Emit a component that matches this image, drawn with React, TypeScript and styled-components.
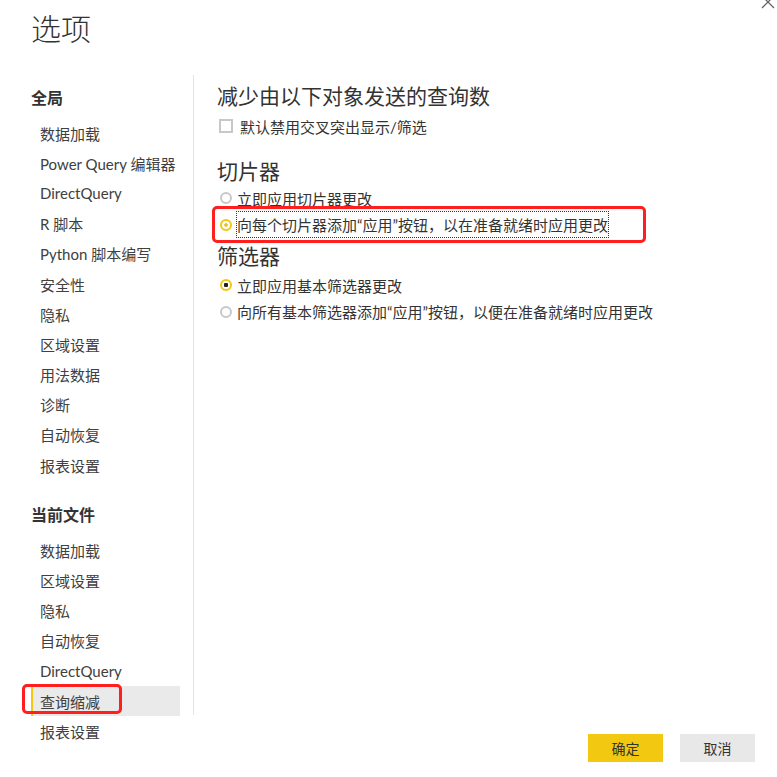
import React from "react";
import styled, { createGlobalStyle, css } from "styled-components";

const Global = createGlobalStyle`
  html, body { margin: 0; padding: 0; background: #fff; }
  body {
    font-family: Lato, "Noto Sans CJK SC", sans-serif;
    color: #333;
  }
  * { box-sizing: border-box; }
`;

const Dialog = styled.div`
  position: relative;
  width: 777px;
  height: 777px;
  display: flex;
  flex-direction: column;
  overflow: hidden;
  background: #fff;
`;

const Header = styled.header`
  height: 75px;
  padding: 7px 0 0 31px;
  flex-shrink: 0;
`;

const Title = styled.h1`
  margin: 0;
  font-family: "Noto Sans CJK SC", sans-serif;
  font-weight: 300;
  font-size: 30px;
  line-height: 40px;
  color: #333;
`;

const Close = styled.button`
  position: absolute;
  top: -7px;
  right: 0;
  width: 18px;
  height: 18px;
  padding: 0;
  border: 0;
  background: transparent;
  color: #666;
`;

const Body = styled.div`
  flex: 1;
  display: flex;
  align-items: flex-start;
`;

const Nav = styled.nav`
  width: 193px;
  padding: 10px 0 0 31px;
  flex-shrink: 0;
`;

const NavHeading = styled.div<{ $first?: boolean }>`
  font-family: "Noto Sans CJK SC", sans-serif;
  font-weight: 700;
  font-size: 16px;
  line-height: 24px;
  color: #333;
  margin: ${(p) => (p.$first ? "0" : "22px")} 0 9px;
`;

const NavItem = styled.div<{ $active?: boolean }>`
  position: relative;
  width: 149px;
  height: 30.2px;
  display: flex;
  align-items: center;
  padding-left: 9px;
  font-size: 15px;
  color: #404040;
  white-space: nowrap;
  ${(p) =>
    p.$active &&
    css`
      background: #eaeaea;
      border-left: 2px solid #f2c811;
      padding-left: 7px;
    `}
`;

const Divider = styled.div`
  width: 1px;
  height: 640px;
  background: #e3e3e3;
  flex-shrink: 0;
`;

const Content = styled.main`
  flex: 1;
  align-self: stretch;
  display: flex;
  flex-direction: column;
  padding: 6px 22px 15px 23px;
`;

const SectionTitle = styled.h2<{ $gap: number }>`
  margin: ${(p) => p.$gap}px 0 0;
  font-family: "Noto Sans CJK SC", sans-serif;
  font-weight: 400;
  font-size: 21px;
  line-height: 28px;
  color: #333;
`;

const CheckRow = styled.label`
  margin-top: 6px;
  height: 22px;
  display: flex;
  align-items: center;
  gap: 7px;
  padding-left: 2px;
  font-size: 15px;
  color: #333;
`;

const CheckBox = styled.span`
  width: 14px;
  height: 14px;
  border: 2px solid #c8c8c8;
  background: #fff;
`;

const RadioGroup = styled.div<{ $gap: number }>`
  margin-top: ${(p) => p.$gap}px;
  display: flex;
  flex-direction: column;
`;

const RadioRow = styled.label`
  position: relative;
  height: 26.5px;
  display: flex;
  align-items: center;
  gap: 5px;
  padding-left: 3px;
  font-size: 15px;
  color: #333;
  white-space: nowrap;
`;

const RadioDot = styled.span<{ $checked?: boolean; $focus?: boolean }>`
  width: 12px;
  height: 12px;
  border-radius: 50%;
  flex-shrink: 0;
  border: 2px solid ${(p) => (p.$checked ? "#f2c811" : "#c8c8c8")};
  background: ${(p) =>
    p.$checked
      ? p.$focus
        ? "radial-gradient(circle, #e8c030 0 1.5px, #fff 2px)"
        : "radial-gradient(circle, #222 0 2px, #fff 2.5px)"
      : "#fff"};
`;

const RadioText = styled.span<{ $focus?: boolean }>`
  padding: 2px 0;
  ${(p) =>
    p.$focus &&
    css`
      outline: 1px dotted #333;
      outline-offset: 0;
    `}
`;

const Annotation = styled.span<{ $l: number; $t: number; $w: number; $h: number }>`
  position: absolute;
  left: ${(p) => p.$l}px;
  top: ${(p) => p.$t}px;
  width: ${(p) => p.$w}px;
  height: ${(p) => p.$h}px;
  border: 3px solid #ff1f1f;
  border-radius: 5px;
  pointer-events: none;
`;

const Footer = styled.footer`
  margin-top: auto;
  display: flex;
  justify-content: flex-end;
  gap: 17px;
`;

const Button = styled.button<{ $primary?: boolean }>`
  width: 75px;
  height: 28px;
  border: 0;
  padding: 0;
  font-family: "Noto Sans CJK SC", sans-serif;
  font-size: 14px;
  color: #333;
  background: ${(p) => (p.$primary ? "#f2c811" : "#e8e8e8")};
`;

const globalItems = [
  "数据加载",
  "Power Query 编辑器",
  "DirectQuery",
  "R 脚本",
  "Python 脚本编写",
  "安全性",
  "隐私",
  "区域设置",
  "用法数据",
  "诊断",
  "自动恢复",
  "报表设置",
];

const fileItems = ["数据加载", "区域设置", "隐私", "自动恢复", "DirectQuery", "查询缩减", "报表设置"];

export default function App() {
  return (
    <>
      <Global />
      <Dialog>
        <Close aria-label="关闭">
          <svg width="18" height="18" viewBox="0 0 18 18">
            <path d="M3 3 L15 15 M15 3 L3 15" stroke="#666" strokeWidth="1.3" fill="none" />
          </svg>
        </Close>
        <Header>
          <Title>选项</Title>
        </Header>
        <Body>
          <Nav>
            <NavHeading $first>全局</NavHeading>
            {globalItems.map((t, i) => (
              <NavItem key={"g" + i}>{t}</NavItem>
            ))}
            <NavHeading>当前文件</NavHeading>
            {fileItems.map((t, i) => (
              <NavItem key={"f" + i} $active={t === "查询缩减"}>
                {t}
                {t === "查询缩减" && <Annotation $l={-11} $t={-2} $w={100} $h={30} />}
              </NavItem>
            ))}
          </Nav>
          <Divider />
          <Content>
            <SectionTitle $gap={0}>减少由以下对象发送的查询数</SectionTitle>
            <CheckRow>
              <CheckBox />
              默认禁用交叉突出显示/筛选
            </CheckRow>
            <SectionTitle $gap={19}>切片器</SectionTitle>
            <RadioGroup $gap={1}>
              <RadioRow>
                <RadioDot />
                <RadioText>立即应用切片器更改</RadioText>
              </RadioRow>
              <RadioRow>
                <RadioDot $checked $focus />
                <RadioText $focus>向每个切片器添加“应用”按钮，以在准备就绪时应用更改</RadioText>
                <Annotation $l={-5} $t={-6} $w={434} $h={37} />
              </RadioRow>
            </RadioGroup>
            <SectionTitle $gap={3}>筛选器</SectionTitle>
            <RadioGroup $gap={3}>
              <RadioRow>
                <RadioDot $checked />
                <RadioText>立即应用基本筛选器更改</RadioText>
              </RadioRow>
              <RadioRow>
                <RadioDot />
                <RadioText>向所有基本筛选器添加“应用”按钮，以便在准备就绪时应用更改</RadioText>
              </RadioRow>
            </RadioGroup>
            <Footer>
              <Button $primary>确定</Button>
              <Button>取消</Button>
            </Footer>
          </Content>
        </Body>
      </Dialog>
    </>
  );
}
